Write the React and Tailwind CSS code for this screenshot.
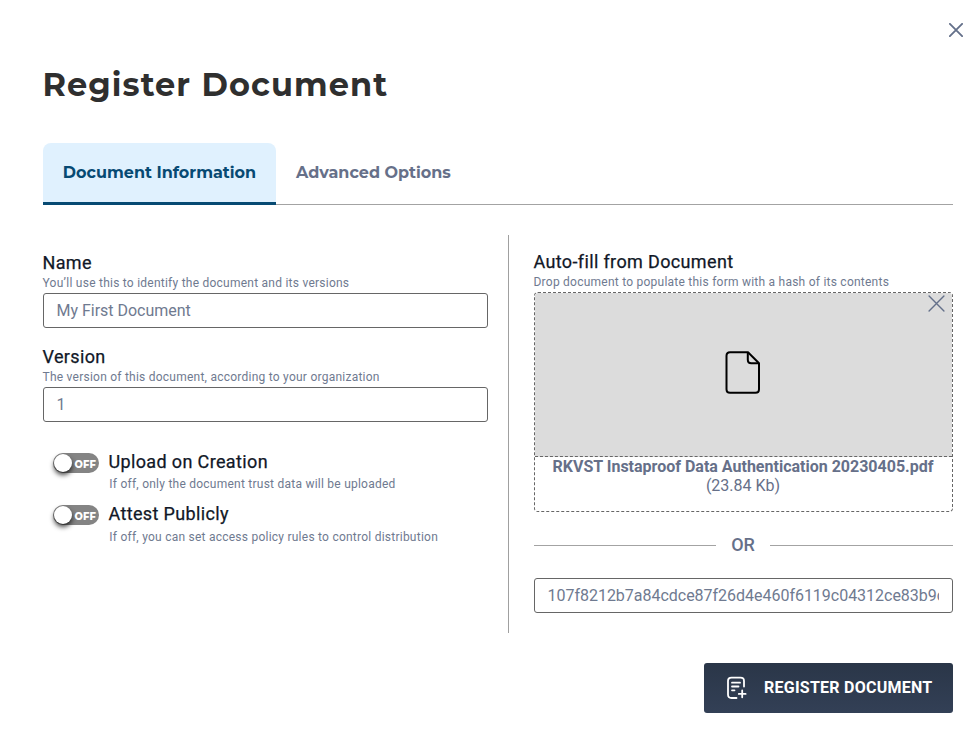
import React from 'react';

function Label({ children }) {
  return <div className="-ml-[0.5px] h-[22px] text-[18px] leading-[22px] font-normal tracking-[0.36px] whitespace-nowrap text-[#111827] [-webkit-text-stroke:0.25px_#111827]">{children}</div>;
}

function Hint({ children }) {
  return <div className="-ml-[0.5px] mt-px mb-px h-[17px] text-[12px] leading-[17px] tracking-[0.24px] whitespace-nowrap text-[#6f7a90]">{children}</div>;
}

function Field({ label, hint, value }) {
  return (
    <div>
      <Label>{label}</Label>
      <Hint>{hint}</Hint>
      <TextInput label={label} value={value} />
    </div>
  );
}

function TextInput({ label, value }) {
  return (
    <input
      readOnly
      aria-label={label}
      value={value}
      className="block h-[35px] w-full rounded-[3px] border border-[#666] bg-white pr-[13px] pl-[12.5px] text-[16px] tracking-[-0.02px] text-[#6f7a90] outline-none"
    />
  );
}

function Toggle({ label, hint, hintClass }) {
  return (
    <div className="flex h-[52px] pl-[10px]">
      <div className="mt-[3px] flex h-5 w-[46px] items-center rounded-full bg-[#848484] pl-px">
        <div className="h-[18px] w-[18px] shrink-0 rounded-full bg-white shadow-[0_3px_5px_rgba(0,0,0,0.75)]" />
        <div className="ml-[2.5px] pt-px font-['Montserrat','Inter',sans-serif] text-[9.9px] leading-5 font-extrabold tracking-[0.2px] text-white">OFF</div>
      </div>
      <div className="ml-[9.5px]">
        <div className="h-6 text-[18px] leading-6 font-normal tracking-[0.36px] text-[#111827] [-webkit-text-stroke:0.25px_#111827]">{label}</div>
        <div className={`pl-[0.8px] text-[12px] leading-5 tracking-[0.24px] whitespace-nowrap text-[#6f7a90] ${hintClass}`}>{hint}</div>
      </div>
    </div>
  );
}

function Cross({ className, width }) {
  return (
    <svg className={className} viewBox="0 0 16 16" fill="none" stroke="#64708a" strokeWidth={width} strokeLinecap="round">
      <path d="M1 1L15 15M15 1L1 15" />
    </svg>
  );
}

export default function App() {
  return (
    <div className="h-[732px] w-[977px] overflow-hidden bg-white pr-6 pl-[43px] font-['Roboto',sans-serif]">
      <div className="-mr-[10px] flex h-[60px] justify-end pt-[23px]">
        <Cross className="h-[14px] w-[14px]" width="2.1" />
      </div>
      <h1 className="-ml-[0.5px] h-[50px] font-['Montserrat','Inter',sans-serif] text-[32px] leading-[50px] font-bold tracking-[1.08px] whitespace-nowrap text-[#2f2f2f]">
        Register Document
      </h1>
      <div className="mt-[33px] flex h-[62px] border-b border-[#a3a3a3] font-['Montserrat','Inter',sans-serif] text-[16px] leading-[59px] font-bold whitespace-nowrap">
        <div className="h-[62px] w-[233px] rounded-t-[8px] border-b-3 border-[#074a73] bg-[#e0f1fe] text-center text-[#074a73]">Document Information</div>
        <div className="ml-5 text-[#667089]">Advanced Options</div>
      </div>

      <div className="mt-[30px] flex h-[398px]">
        <div className="w-[445px] pt-[17px]">
          <Field label="Name" hint="You’ll use this to identify the document and its versions" value="My First Document" />
          <div className="mt-[18px]">
            <Field label="Version" hint="The version of this document, according to your organization" value="1" />
          </div>
          <div className="mt-7">
            <Toggle label="Upload on Creation" hint="If off, only the document trust data will be uploaded" hintClass="mt-0" />
            <Toggle label="Attest Publicly" hint="If off, you can set access policy rules to control distribution" hintClass="mt-px" />
          </div>
        </div>

        <div className="ml-5 w-px bg-[#a0a0a0]" />

        <div className="ml-[25px] w-[419px] pt-4">
          <Label>Auto-fill from Document</Label>
          <Hint>Drop document to populate this form with a hash of its contents</Hint>
          <div className="h-[220px] rounded-[4px] border border-dashed border-[#666]">
            <div className="relative flex h-[164px] items-center justify-center rounded-t-[3px] border-b border-dashed border-[#666] bg-[#dcdcdc]">
              <svg className="-mt-[4px] mr-px h-[44px] w-[36px]" viewBox="0 0 36 44" fill="none" stroke="#000" strokeWidth="2" strokeLinejoin="round">
                <path d="M5 1.3H23L34 12.2V38.2Q34 41.7 30.5 41.7H5Q1.5 41.7 1.5 38.2V4.8Q1.5 1.3 5 1.3Z" />
                <path d="M22.8 1.3V8.7Q22.8 12.2 26.3 12.2H34" />
              </svg>
              <Cross className="absolute top-[2px] right-[7px] h-[17px] w-[17px]" width="1.3" />
            </div>
            <div className="-ml-px text-center text-[16px] leading-[19px] text-[#667089]">
              <div className="font-bold whitespace-nowrap">RKVST Instaproof Data Authentication 20230405.pdf</div>
              <div>(23.84 Kb)</div>
            </div>
          </div>
          <div className="flex h-[66px] items-center">
            <div className="h-px w-[182px] bg-[#a3a3a3]" />
            <div className="flex-1 text-center text-[18px] leading-6 font-medium text-[#667089]">OR</div>
            <div className="h-px w-[183px] bg-[#a3a3a3]" />
          </div>
          <TextInput label="Document hash" value="107f8212b7a84cdce87f26d4e460f6119c04312ce83b9c6e" />
        </div>
      </div>

      <div className="mt-[30px] flex justify-end">
        <button className="flex h-[50px] w-[249px] items-center rounded-[3px] bg-linear-to-b from-[#2a3648] to-[#334056] pl-[22px] text-[16px] font-bold text-white">
          <svg className="h-6 w-[22px] shrink-0" viewBox="0 0 22 24" fill="none" stroke="#fff" strokeWidth="1.8" strokeLinecap="round" strokeLinejoin="round">
            <path d="M10.5 22H5.5Q2 22 2 18.5V5Q2 1.7 5.5 1.7H14.5Q18 1.7 18 5V10.5" />
            <path d="M6 6.7H14M6 10.5H12.5M6 14.3H8.5M16.2 14.5V21.3M12.8 17.9H19.6" />
          </svg>
          <span className="ml-4 tracking-[0.25px] whitespace-nowrap">REGISTER DOCUMENT</span>
        </button>
      </div>
    </div>
  );
}
